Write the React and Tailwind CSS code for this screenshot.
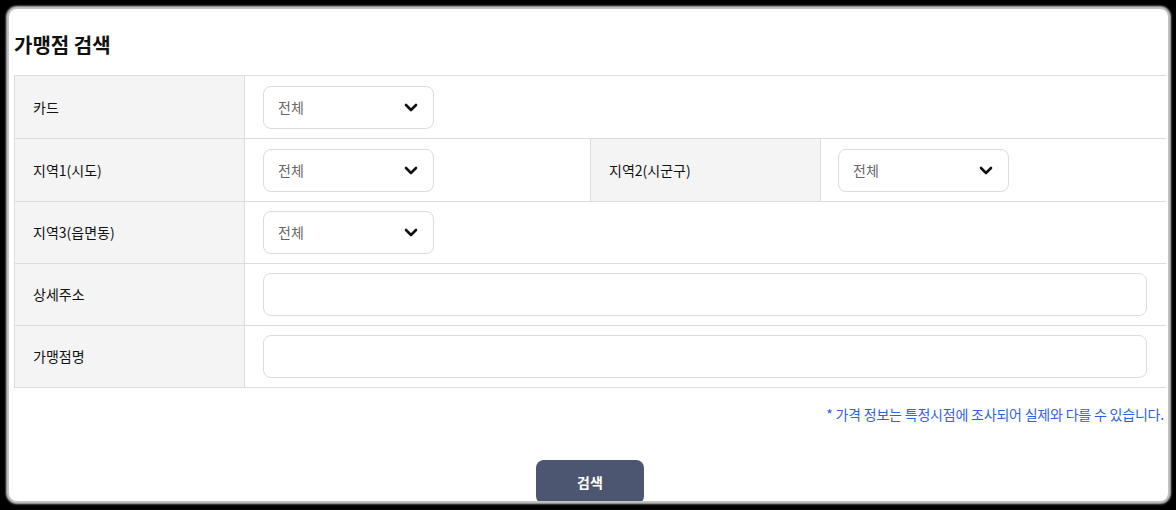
import React from 'react';

const Chevron = () => (
  <svg width="14" height="9" viewBox="0 0 14 9" fill="none" stroke="#111" strokeWidth="2.6" strokeLinecap="round" strokeLinejoin="round">
    <path d="M2 2l5 5 5-5" />
  </svg>
);

const SelectBox = () => (
  <div className="flex h-[43px] w-[171px] items-center justify-between rounded-[8px] border border-[#dcdcdc] bg-white pl-[14px] pr-[15px]">
    <span className="text-[14px] text-[#666]">전체</span>
    <Chevron />
  </div>
);

const TextBox = () => (
  <div className="h-[43px] w-[884px] rounded-[8px] border border-[#dcdcdc] bg-white" />
);

const Label = ({ children }) => (
  <div className="flex w-[229px] shrink-0 items-center bg-[#f4f4f4] pl-[18px] text-[14px] text-[#111]">
    {children}
  </div>
);

const Row = ({ h, children }) => (
  <div className={`flex border-b border-[#dddddd] ${h}`}>{children}</div>
);

const Value = ({ w, pl = 'pl-[18px]', children }) => (
  <div className={`flex items-center border-l border-[#dddddd] ${pl} ${w}`}>{children}</div>
);

export default function App() {
  return (
    <div
      className="h-[510px] w-[1176px] bg-black pb-[9px] pl-[9px] pr-[8px] pt-[9px]"
      style={{ fontFamily: '"Noto Sans CJK KR", "Noto Sans", sans-serif' }}
    >
      <div className="h-full w-full overflow-hidden rounded-[8px] bg-white pl-[5px] pt-[22px] shadow-[0_0_2px_3px_#c4c4c4]">
        <h1 className="mb-[16px] text-[20px] font-bold leading-[28px] text-[#111]">가맹점 검색</h1>

        <div className="w-[1152px] border-l border-t border-[#dddddd]">
          <Row h="h-[63px]">
            <Label>카드</Label>
            <Value w="flex-1">
              <SelectBox />
            </Value>
          </Row>
          <Row h="h-[63px]">
            <Label>지역1(시도)</Label>
            <Value w="w-[346px]">
              <SelectBox />
            </Value>
            <div className="border-l border-[#dddddd]" />
            <Label>지역2(시군구)</Label>
            <Value w="flex-1" pl="pl-[17px]">
              <SelectBox />
            </Value>
          </Row>
          <Row h="h-[62px]">
            <Label>지역3(읍면동)</Label>
            <Value w="flex-1">
              <SelectBox />
            </Value>
          </Row>
          <Row h="h-[62px]">
            <Label>상세주소</Label>
            <Value w="flex-1">
              <TextBox />
            </Value>
          </Row>
          <Row h="h-[62px]">
            <Label>가맹점명</Label>
            <Value w="flex-1">
              <TextBox />
            </Value>
          </Row>
        </div>

        <p className="mt-[16px] w-[1152px] pr-[2px] text-right text-[14px] leading-[20px] tracking-[-0.2px] text-[#2f5fe6]">
          * 가격 정보는 특정시점에 조사되어 실제와 다를 수 있습니다.
        </p>

        <div className="mt-[36px] flex w-[1152px] justify-center">
          <button className="h-[44px] w-[108px] rounded-[8px] bg-[#4c5670] text-[14px] font-semibold text-white">
            검색
          </button>
        </div>
      </div>
    </div>
  );
}
